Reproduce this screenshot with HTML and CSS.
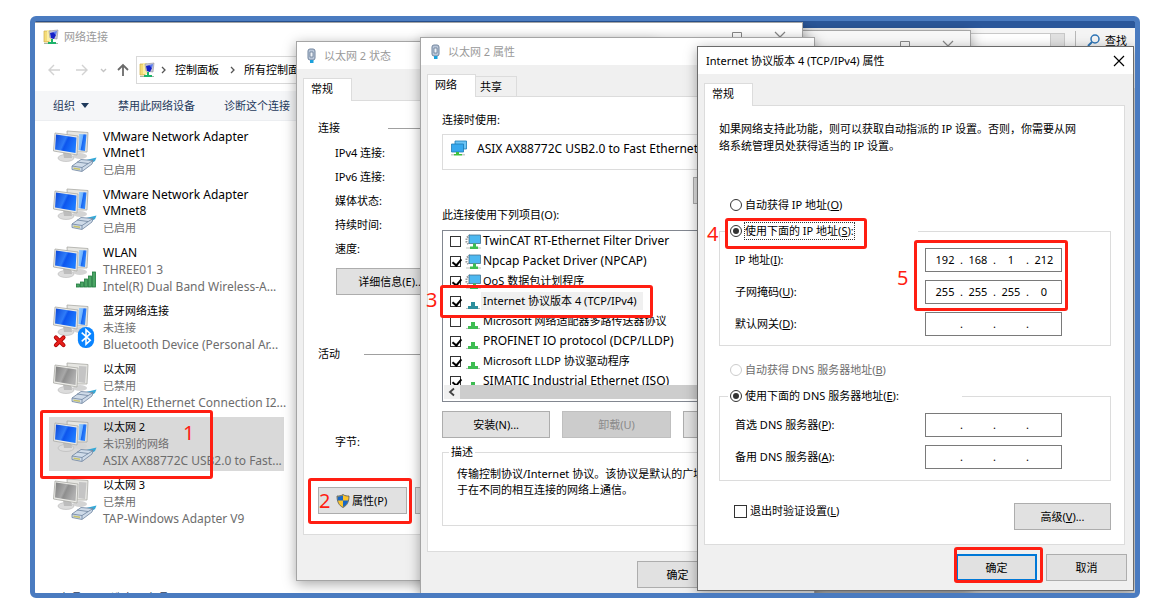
FILE: index.html
```html
<!DOCTYPE html>
<html lang="zh-CN">
<head>
    <meta charset="UTF-8">
    <title>网络连接</title>
    <link rel="stylesheet" href="styles.css">
</head>
<body>
    <!-- Icons -->
    <svg class="sprite" aria-hidden="true">
        <defs>
            <linearGradient id="blue" x1="0" y1="0" x2="1" y2="0.400">
                <stop offset="0" stop-color="#0a45d8"/>
                <stop offset="0.5" stop-color="#2f7cf8"/>
                <stop offset="0.6" stop-color="#0d55ee"/>
                <stop offset="1" stop-color="#1b78ff"/>
            </linearGradient>
            <linearGradient id="blue-back" x1="0" y1="0" x2="1" y2="0.400">
                <stop offset="0" stop-color="#9cd0ff"/>
                <stop offset="0.5" stop-color="#6fb4ff"/>
                <stop offset="0.6" stop-color="#1a66f0"/>
                <stop offset="1" stop-color="#2f8aff"/>
            </linearGradient>
            <linearGradient id="gray" x1="0" y1="0" x2="1" y2="0.400">
                <stop offset="0" stop-color="#7d7d7d"/>
                <stop offset="0.5" stop-color="#a8a8a8"/>
                <stop offset="0.6" stop-color="#8e8e8e"/>
                <stop offset="1" stop-color="#b0b0b0"/>
            </linearGradient>
        </defs>
        <symbol id="case" viewBox="0 0 44 44">
            <ellipse cx="27" cy="26" rx="7" ry="3" fill="#d4d4d4"/>
            <path d="M14 1 L35 2.500 L34 22 L15 22Z" fill="#e6e6e2" stroke="#a9a9a5" stroke-width="0.8"/>
            <ellipse cx="13" cy="28" rx="8" ry="3.5" fill="#dcdcdc" stroke="#b5b5b5" stroke-width="0.6"/>
            <path d="M10 22h8l1 6h-8z" fill="#bdbdbd"/>
            <path d="M2 3 L25 6 L24 25 L0.500 21Z" fill="#ecece8" stroke="#a9a9a5" stroke-width="0.8"/>
        </symbol>
        <symbol id="pc" viewBox="0 0 44 44">
            <use href="#case"/>
            <path d="M26 4 L33.500 4.500 L32 21 L25.500 20Z" fill="url(#blue-back)"/>
            <path d="M3 4.500 L23.500 7.500 L22.500 23 L2 19.500Z" fill="url(#blue)"/>
        </symbol>
        <symbol id="pc-off" viewBox="0 0 44 44">
            <use href="#case"/>
            <path d="M26 4 L33.500 4.500 L32 21 L25.500 20Z" fill="#c4c4c4"/>
            <path d="M3 4.500 L23.500 7.500 L22.500 23 L2 19.500Z" fill="url(#gray)"/>
        </symbol>
        <symbol id="plug" viewBox="0 0 44 44">
            <path d="M33 30 L43.500 27.500 L42 31 L37 34Z" fill="#35a9d8"/>
            <path d="M19 36 L28 29.500 L40 30.500 L39 34 L29 41.500 L19 39.500Z" fill="#cfdbe9" stroke="#6d839e" stroke-width="0.8"/>
            <path d="M19 36 L29 37.500 L40 30.500 M29 37.500 L29 41 M24 32 L35 33.500" fill="none" stroke="#6d839e" stroke-width="0.8"/>
            <path d="M20.500 37.500 L27 38.500 L27 40 L20.500 39Z" fill="#c9c46a"/>
        </symbol>
        <symbol id="bars" viewBox="0 0 44 44">
            <g fill="#4aa564" stroke="#1e7a3c" stroke-width="0.8">
                <rect x="23.500" y="38" width="3" height="3"/>
                <rect x="27.500" y="36" width="3" height="5"/>
                <rect x="31.500" y="33" width="3" height="8"/>
                <rect x="35.500" y="30" width="3" height="11"/>
                <rect x="39.500" y="26" width="3" height="15"/>
            </g>
        </symbol>
        <symbol id="bluetooth" viewBox="0 0 44 46">
            <rect x="25" y="24" width="17" height="22" rx="8" fill="#0a84ff"/>
            <path d="M29 30 L38 38 L33.500 42 L33.500 27 L38 31 L29 39" fill="none" stroke="#fff" stroke-width="1.6"/>
            <path d="M2 35 L10 43 M10 35 L2 43" stroke="#a80000" stroke-width="4.200" stroke-linecap="round"/>
            <path d="M2 35 L10 43 M10 35 L2 43" stroke="#e8201c" stroke-width="2.600" stroke-linecap="round"/>
        </symbol>
        <symbol id="folder-net" viewBox="0 0 16 16">
            <path d="M1 2h5v11H1z" fill="#f5dc78" stroke="#cfae45" stroke-width="0.7"/>
            <path d="M4 1h4v11H4z" fill="#fbeea5"/>
            <path d="M6 2 L15 1 L14 10 L7 9Z" fill="#c9c9d6" stroke="#8e8ea0" stroke-width="0.6"/>
            <path d="M7 4 L11 3 L13 6 L11 10 L8 9Z" fill="#1420c8"/>
            <path d="M10 3 L14 2 L13 6Z" fill="#5b7cf0"/>
            <path d="M8 10h2v3H8z M5 13h8v2H5z" fill="#1db36a"/>
            <path d="M1 14h4v1H1z M13 14h2v1h-2z" fill="#a5b5a5"/>
        </symbol>
        <symbol id="cable" viewBox="0 0 12 16">
            <rect x="2" y="1" width="7" height="11" rx="2" fill="#b9c6d8" stroke="#73869f"/>
            <path d="M4 4h3v5H4z" fill="#eef3f8" stroke="#5a6e8a" stroke-width="0.7"/>
            <path d="M4 12h3.500v3H4z" fill="#1ba1dc"/>
        </symbol>
        <symbol id="screens" viewBox="0 0 18 18">
            <path d="M5 1h11.500v8H5z" fill="#6cc4f5" stroke="#1d7bb4" stroke-width="0.8"/>
            <path d="M1.500 4h12v8h-12z" fill="#36a8ee" stroke="#1d7bb4" stroke-width="0.8"/>
            <path d="M6 12h3v2H6z M4 14h8v1.500H4z" fill="#3fbf3f"/>
            <path d="M1 14h3v1.500H1z M12 14h3v1.500h-3z" fill="#cdcdcd"/>
        </symbol>
        <symbol id="service" viewBox="0 0 16 16">
            <path d="M5 1 L1.500 4 L1.500 8 L4 11" fill="none" stroke="#9b9b9b" stroke-width="2" stroke-dasharray="1.500 1"/>
            <path d="M4 1h11.500v8.500H4z" fill="#4db8f0" stroke="#40718f" stroke-width="0.8"/>
            <path d="M8 9.500h3v3H8z M5 12.500h8v2.500H5z" fill="#3ebd52"/>
            <path d="M1 13h4v2H1z M13 13h3v2h-3z" fill="#dde2dd"/>
        </symbol>
        <symbol id="protocol" viewBox="0 0 16 16">
            <path d="M6 8h4v4H6z M3 12h10v3H3z" fill="currentColor"/>
            <path d="M1 14h2v1H1z M13 14h2v1h-2z" fill="#bbb"/>
        </symbol>
        <symbol id="shield" viewBox="0 0 14 14">
            <path d="M7 0.500 C5 2 3 2 1 2 C1 8 3 11.500 7 13.500 C11 11.500 13 8 13 2 C11 2 9 2 7 0.500Z" fill="#fcc52c" stroke="#555" stroke-width="0.8"/>
            <path d="M7 1.200 C5 2.400 3 2.500 1.500 2.500 L1.600 6.500 H7Z M7 6.500h5.300C11.600 9.500 10 11.500 7 13Z" fill="#1a67c6"/>
        </symbol>
        <symbol id="min" viewBox="0 0 12 12"><path d="M1 6.500h10" stroke="currentColor"/></symbol>
        <symbol id="max" viewBox="0 0 12 12"><path d="M1.500 1.500h9v9h-9z" fill="none" stroke="currentColor"/></symbol>
        <symbol id="close" viewBox="0 0 12 12"><path d="M1 1l10 10M11 1L1 11" stroke="currentColor" stroke-width="1.200"/></symbol>
    </svg>

    <main class="desktop">
        <!-- Document editor in the background -->
        <div class="editor">
            <div class="editor-title"></div>
            <div class="editor-ribbon">
                <div class="style-list"><span class="style-scroll"></span></div>
                <button class="find">
                    <svg viewBox="0 0 13 13"><circle cx="8" cy="5" r="4" fill="none" stroke="#2e75b6" stroke-width="1.500"/><path d="M5 8L1 12" stroke="#2e75b6" stroke-width="2"/></svg>
                    查找
                </button>
            </div>
        </div>

        <section class="window back-window">
            <div class="caption">
                <button aria-label="最大化"><svg><use href="#max"/></svg></button>
                <button aria-label="关闭"><svg><use href="#close"/></svg></button>
            </div>
        </section>

        <!-- Network connections -->
        <section class="window explorer">
            <header class="explorer-title">
                <svg class="icon16"><use href="#folder-net"/></svg>
                <span>网络连接</span>
                <div class="caption">
                    <button aria-label="最小化"><svg><use href="#min"/></svg></button>
                    <button aria-label="最大化"><svg><use href="#max"/></svg></button>
                    <button aria-label="关闭"><svg><use href="#close"/></svg></button>
                </div>
            </header>
            <nav class="nav-row">
                <svg class="nav-arrows" viewBox="0 0 84 16" fill="none">
                    <path d="M12 8H1M6 3L1 8l5 5" stroke="#d2d2d2" stroke-width="1.400"/>
                    <path d="M28 8h11M34 3l5 5-5 5" stroke="#d2d2d2" stroke-width="1.400"/>
                    <path d="M53 7l2.500 2.500L58 7" stroke="#c4c4c4" stroke-width="1.400"/>
                    <path d="M75 14V3M70 8l5-5 5 5" stroke="#6a6a6a" stroke-width="1.800"/>
                </svg>
                <div class="address">
                    <svg class="icon16"><use href="#folder-net"/></svg>
                    <svg class="crumb" viewBox="0 0 6 8"><path d="M1 1l3 3-3 3" fill="none" stroke="#555" stroke-width="1.300"/></svg>
                    <a href="#">控制面板</a>
                    <svg class="crumb" viewBox="0 0 6 8"><path d="M1 1l3 3-3 3" fill="none" stroke="#555" stroke-width="1.300"/></svg>
                    <a href="#">所有控制面板项</a>
                </div>
            </nav>
            <div class="commands">
                <button>组织 <span class="arrow"></span></button>
                <button>禁用此网络设备</button>
                <button>诊断这个连接</button>
            </div>
            <ul class="adapters">
                <li>
                    <svg><use href="#pc"/><use href="#plug"/></svg>
                    <div><b class="latin">VMware Network Adapter VMnet1</b><span>已启用</span></div>
                </li>
                <li>
                    <svg><use href="#pc"/><use href="#plug"/></svg>
                    <div><b class="latin">VMware Network Adapter VMnet8</b><span>已启用</span></div>
                </li>
                <li>
                    <svg><use href="#pc"/><use href="#bars"/></svg>
                    <div><b class="latin">WLAN</b><span class="latin">THREE01 3</span><span class="latin">Intel(R) Dual Band Wireless-A...</span></div>
                </li>
                <li>
                    <svg><use href="#pc"/><use href="#bluetooth"/></svg>
                    <div><b>蓝牙网络连接</b><span>未连接</span><span class="latin">Bluetooth Device (Personal Ar...</span></div>
                </li>
                <li>
                    <svg><use href="#pc-off"/><use href="#plug"/></svg>
                    <div><b>以太网</b><span>已禁用</span><span class="latin">Intel(R) Ethernet Connection I2...</span></div>
                </li>
                <li class="selected">
                    <svg><use href="#pc"/><use href="#plug"/></svg>
                    <div><b>以太网 2</b><span>未识别的网络</span><span class="latin">ASIX AX88772C USB2.0 to Fast...</span></div>
                </li>
                <li>
                    <svg><use href="#pc-off"/><use href="#plug"/></svg>
                    <div><b>以太网 3</b><span>已禁用</span><span class="latin">TAP-Windows Adapter V9</span></div>
                </li>
            </ul>
            <footer class="explorer-status"><span>7 个项目</span><span>选中 1 个项目</span></footer>
        </section>

        <!-- Ethernet 2 status -->
        <section class="window dialog status">
            <header class="title"><svg class="icon-cable"><use href="#cable"/></svg>以太网 2 状态</header>
            <div class="tabs"><button class="tab active">常规</button></div>
            <div class="panel">
                <h2>连接</h2>
                <ul class="facts">
                    <li>IPv4 连接:</li>
                    <li>IPv6 连接:</li>
                    <li>媒体状态:</li>
                    <li>持续时间:</li>
                    <li>速度:</li>
                </ul>
                <button class="btn details">详细信息(E)...</button>
                <h2 class="activity">活动</h2>
                <p class="bytes">字节:</p>
                <div class="btn-row">
                    <button class="btn"><svg class="icon-shield"><use href="#shield"/></svg>属性(P)</button>
                    <button class="btn" aria-label="禁用"></button>
                </div>
            </div>
        </section>

        <!-- Ethernet 2 properties -->
        <section class="window dialog properties">
            <header class="title"><svg class="icon-cable"><use href="#cable"/></svg>以太网 2 属性</header>
            <div class="tabs"><button class="tab active">网络</button><button class="tab">共享</button></div>
            <div class="panel">
                <p>连接时使用:</p>
                <div class="device latin"><svg><use href="#screens"/></svg>ASIX AX88772C USB2.0 to Fast Ethernet</div>
                <button class="btn configure" aria-label="配置"></button>
                <p>此连接使用下列项目(O):</p>
                <div class="items">
                    <div class="item-list">
                        <label><input type="checkbox"><svg><use href="#service"/></svg><span class="latin">TwinCAT RT-Ethernet Filter Driver</span></label>
                        <label><input type="checkbox" checked><svg><use href="#service"/></svg><span class="latin">Npcap Packet Driver (NPCAP)</span></label>
                        <label><input type="checkbox" checked><svg><use href="#service"/></svg><span>QoS 数据包计划程序</span></label>
                        <label class="current"><input type="checkbox" checked><svg><use href="#protocol"/></svg><span>Internet 协议版本 4 (TCP/IPv4)</span></label>
                        <label><input type="checkbox"><svg><use href="#protocol"/></svg><span>Microsoft 网络适配器多路传送器协议</span></label>
                        <label><input type="checkbox" checked><svg><use href="#protocol"/></svg><span class="latin">PROFINET IO protocol (DCP/LLDP)</span></label>
                        <label><input type="checkbox" checked><svg><use href="#protocol"/></svg><span>Microsoft LLDP 协议驱动程序</span></label>
                        <label><input type="checkbox" checked><svg><use href="#protocol"/></svg><span class="latin">SIMATIC Industrial Ethernet (ISO)</span></label>
                    </div>
                    <div class="scrollbar">
                        <svg viewBox="0 0 16 14"><path d="M10 3.500L6 7l4 3.500" fill="none" stroke="#444" stroke-width="1.800"/></svg>
                        <span></span>
                    </div>
                </div>
                <div class="btn-row">
                    <button class="btn">安装(N)...</button>
                    <button class="btn" disabled>卸载(U)</button>
                    <button class="btn" aria-label="属性"></button>
                </div>
                <fieldset>
                    <legend>描述</legend>
                    <p>传输控制协议/Internet 协议。该协议是默认的广域网络协议，用于在不同的相互连接的网络上通信。</p>
                </fieldset>
            </div>
            <footer class="dialog-buttons">
                <button class="btn">确定</button>
                <button class="btn" aria-label="取消"></button>
            </footer>
        </section>

        <!-- IPv4 properties -->
        <section class="window dialog ipv4">
            <header class="title">Internet 协议版本 4 (TCP/IPv4) 属性
                <button class="title-close" aria-label="关闭"><svg><use href="#close"/></svg></button>
            </header>
            <div class="tabs"><button class="tab active">常规</button></div>
            <form class="panel" onsubmit="return false">
                <p class="intro">如果网络支持此功能，则可以获取自动指派的 IP 设置。否则，你需要从网络系统管理员处获得适当的 IP 设置。</p>
                <label class="choice"><input type="radio" name="ip"><span>自动获得 IP 地址(<u>O</u>)</span></label>
                <fieldset>
                    <legend><label class="choice focused"><input type="radio" name="ip" checked><span>使用下面的 IP 地址(<u>S</u>):</span></label></legend>
                    <div class="field">
                        <label for="ip1">IP 地址(<u>I</u>):</label>
                        <div class="ip-box"><input id="ip1" value="192">.<input value="168" aria-label="IP 2">.<input value="1" aria-label="IP 3">.<input value="212" aria-label="IP 4"></div>
                    </div>
                    <div class="field">
                        <label for="mask1">子网掩码(<u>U</u>):</label>
                        <div class="ip-box"><input id="mask1" value="255">.<input value="255" aria-label="掩码 2">.<input value="255" aria-label="掩码 3">.<input value="0" aria-label="掩码 4"></div>
                    </div>
                    <div class="field">
                        <label for="gate1">默认网关(<u>D</u>):</label>
                        <div class="ip-box"><input id="gate1">.<input aria-label="网关 2">.<input aria-label="网关 3">.<input aria-label="网关 4"></div>
                    </div>
                </fieldset>
                <label class="choice dns-auto"><input type="radio" name="dns" disabled><span>自动获得 DNS 服务器地址(<u>B</u>)</span></label>
                <fieldset class="dns">
                    <legend><label class="choice"><input type="radio" name="dns" checked><span>使用下面的 DNS 服务器地址(<u>E</u>):</span></label></legend>
                    <div class="field">
                        <label for="dns1">首选 DNS 服务器(<u>P</u>):</label>
                        <div class="ip-box"><input id="dns1">.<input aria-label="首选 2">.<input aria-label="首选 3">.<input aria-label="首选 4"></div>
                    </div>
                    <div class="field">
                        <label for="alt1">备用 DNS 服务器(<u>A</u>):</label>
                        <div class="ip-box"><input id="alt1">.<input aria-label="备用 2">.<input aria-label="备用 3">.<input aria-label="备用 4"></div>
                    </div>
                </fieldset>
                <div class="last-row">
                    <label><input type="checkbox">退出时验证设置(<u>L</u>)</label>
                    <button class="btn">高级(<u>V</u>)...</button>
                </div>
            </form>
            <footer class="dialog-buttons">
                <button class="btn default">确定</button>
                <button class="btn">取消</button>
            </footer>
        </section>

        <!-- Step marks -->
        <div class="mark mark-1"></div><span class="step step-1">1</span>
        <div class="mark mark-2"></div><span class="step step-2">2</span>
        <div class="mark mark-3"></div><span class="step step-3">3</span>
        <div class="mark mark-4"></div><span class="step step-4">4</span>
        <div class="mark mark-5"></div><span class="step step-5">5</span>
        <div class="mark mark-ok"></div>
    </main>
</body>
</html>
```

FILE: styles.css
```css
* {
    box-sizing: border-box;
}

body {
    margin: 0;
    padding: 16px 30px 10px;
    height: 100vh;
    background: #fff;
    color: #000;
    font-family: "Noto Sans", "Noto Sans CJK SC", sans-serif;
    font-size: 11px;
    line-height: 16px;
}

button, input {
    font: inherit;
    color: inherit;
}

p, h2, ul, fieldset {
    margin: 0;
    padding: 0;
}

ul {
    list-style: none;
}

svg {
    flex: none;
    display: block;
}

.latin {
    font-size: 12px;
}

.sprite {
    position: absolute;
    width: 0;
    height: 0;
}

.desktop {
    position: relative;
    height: 100%;
    min-height: 582px;
    overflow: hidden;
    border: 5px solid #4a7bc0;
    border-radius: 6px;
    background: #dcdcdc;
}

.window {
    position: absolute;
    background: #fff;
    border: 1px solid #a5a5a5;
    box-shadow: 0 3px 12px rgba(0, 0, 0, 0.35);
}

.icon16 {
    width: 16px;
    height: 16px;
}

/* Editor */
.editor-title {
    height: 7px;
    background: #2b579a;
}

.editor-ribbon {
    display: flex;
    justify-content: flex-end;
    height: 60px;
    padding: 3px 8px;
    background: #f4f4f4;
}

.style-list {
    width: 160px;
    margin: 2px 10px 0 0;
    border: 1px solid #c8c8c8;
    background: #fff;
}

.style-scroll {
    display: block;
    width: 14px;
    height: 100%;
    margin-left: auto;
    background: #e1e1e1;
    border-left: 1px solid #c8c8c8;
}

.find {
    display: flex;
    align-items: flex-start;
    gap: 5px;
    padding: 2px 0 0 11px;
    border: 0;
    border-left: 1px solid #b8b8b8;
    background: none;
}

.find svg {
    width: 13px;
    height: 13px;
    margin-top: 1px;
}

.caption {
    display: flex;
    gap: 31px;
    margin-left: auto;
    color: #888;
}

.caption button {
    padding: 0;
    border: 0;
    background: none;
}

.caption svg {
    width: 12px;
    height: 12px;
}

.back-window {
    top: 9px;
    left: 400px;
    width: 536px;
    height: 560px;
    padding: 9px 16px;
    background: #f7f7f7;
}

.back-window .caption {
    justify-content: flex-end;
}

/* Explorer */
.explorer {
    top: 1px;
    left: 0;
    width: 768px;
    height: calc(100% + 13px);
    border-left: 0;
    display: flex;
    flex-direction: column;
}

.explorer-title {
    display: flex;
    align-items: center;
    gap: 5px;
    height: 28px;
    padding: 0 16px 0 8px;
    color: #999;
}

.nav-row {
    display: flex;
    align-items: center;
    gap: 4px;
    padding: 5px 0 7px 13px;
}

.nav-arrows {
    width: 84px;
    height: 16px;
}

.address {
    display: flex;
    align-items: center;
    flex: 1;
    height: 28px;
    padding-left: 2px;
    border: 1px solid #d9d9d9;
}

.crumb {
    width: 6px;
    height: 8px;
    margin: 0 8px 0 6px;
}

.address a {
    color: #000;
    text-decoration: none;
}

.address a + .crumb {
    margin: 0 8px 0 11px;
}

.commands {
    display: flex;
    gap: 29px;
    height: 30px;
    padding-left: 18px;
    background: #f5f6f8;
    border-bottom: 1px solid #eceef1;
}

.commands button {
    display: flex;
    align-items: center;
    gap: 6px;
    padding: 0;
    border: 0;
    background: none;
    color: #1e395b;
}

.arrow {
    border: 4px solid transparent;
    border-top: 5px solid #1e395b;
    border-bottom: 0;
}

.adapters {
    display: flex;
    flex-direction: column;
    gap: 4px;
    width: 235px;
    margin: 6px 0 0 14px;
}

.adapters li {
    display: flex;
    gap: 6px;
    height: 54px;
    padding: 2px 0 0 4px;
    line-height: 17px;
    color: #6d6d6d;
    white-space: nowrap;
}

.adapters svg {
    width: 44px;
    height: 44px;
    margin-top: 1px;
    overflow: visible;
}

.adapters div {
    flex: 1;
}

.adapters b {
    display: block;
    font-weight: normal;
    line-height: 16px;
    color: #000;
    white-space: normal;
    padding-right: 20px;
}

.adapters span {
    display: block;
}

.adapters .selected {
    background: #d9d9d9;
}

.explorer-status {
    display: flex;
    gap: 20px;
    margin: auto 0 0 14px;
    color: #1e395b;
}

/* Dialogs */
.dialog {
    background: #f0f0f0;
}

.title {
    display: flex;
    align-items: center;
    gap: 6px;
    height: 27px;
    padding-left: 9px;
    background: #fff;
    color: #999;
}

.icon-cable {
    width: 12px;
    height: 16px;
}

.tabs {
    display: flex;
    align-items: flex-end;
    height: 31px;
    padding-left: 6px;
}

.tab {
    width: 41px;
    height: 20px;
    padding: 0 0 0 4px;
    border: 1px solid #dcdcdc;
    border-width: 1px 1px 0 0;
    background: #f0f0f0;
    text-align: left;
}

.tab.active {
    position: relative;
    width: 49px;
    height: 23px;
    margin-bottom: -1px;
    padding: 0 0 2px 7px;
    border-width: 1px 1px 0;
    background: #fff;
}

.panel {
    margin: 0 8px 0 6px;
    padding: 14px 13px 14px 14px;
    border: 1px solid #dcdcdc;
    background: #fff;
}

.btn {
    height: 27px;
    padding: 0;
    border: 1px solid #adadad;
    background: #e1e1e1;
}

.btn:disabled {
    border-color: #bfbfbf;
    background: #ccc;
    color: #8a8a8a;
}

.btn-row {
    display: flex;
}

fieldset {
    min-width: 0;
    border: 1px solid #dcdcdc;
}

legend {
    padding: 0;
}

input[type="checkbox"], input[type="radio"] {
    appearance: none;
    flex: none;
    margin: 0;
    border: 1px solid #333;
    background: #fff;
}

input[type="checkbox"] {
    width: 11px;
    height: 11px;
}

input[type="checkbox"]:checked::before {
    content: "";
    display: block;
    width: 4px;
    height: 7px;
    margin: 0 0 0 3px;
    border: solid #000;
    border-width: 0 2px 2px 0;
    transform: rotate(40deg);
}

input[type="radio"] {
    width: 12px;
    height: 12px;
    padding: 2px;
    border-radius: 50%;
}

input[type="radio"]:checked {
    background: #333 content-box;
}

input:disabled {
    border-color: #ccc;
}

.dialog-buttons {
    display: flex;
    justify-content: flex-end;
    gap: 9px;
    padding: 9px 6px;
}

.dialog-buttons .btn {
    width: 81px;
}

/* Status */
.status {
    top: 20px;
    left: 261px;
    width: 360px;
    padding-bottom: 45px;
}

.status .panel {
    padding: 19px 14px 20px;
}

.status h2 {
    display: flex;
    align-items: center;
    gap: 48px;
    font-size: 11px;
    font-weight: normal;
}

.status h2::after {
    content: "";
    flex: 1;
    height: 1px;
    background: #a0a0a0;
}

.status .activity {
    gap: 24px;
    margin-top: 51px;
}

.facts {
    padding: 5px 0 7px 17px;
    line-height: 24px;
}

.details {
    display: block;
    width: 110px;
    margin-left: 18px;
}

.bytes {
    margin: 72px 0 37px;
    padding-left: 17px;
}

.status .btn-row {
    gap: 8px;
}

.status .btn-row .btn {
    display: flex;
    align-items: center;
    justify-content: flex-start;
    gap: 2px;
    width: 89px;
    padding-left: 17px;
}

.icon-shield {
    width: 14px;
    height: 14px;
}

/* Properties */
.properties {
    top: 16px;
    left: 385px;
    width: 395px;
}

.properties .panel {
    padding: 15px 14px 25px;
}

.device {
    display: flex;
    align-items: center;
    gap: 9px;
    height: 36px;
    margin-top: 6px;
    padding: 0 0 6px 7px;
    border: 1px solid #dcdcdc;
    white-space: nowrap;
}

.device svg {
    width: 18px;
    height: 18px;
}

.configure {
    display: block;
    width: 98px;
    margin: 7px 0 3px auto;
}

.items {
    margin: 7px 0 9px;
    padding: 0 1px 2px;
    border: 1px solid #828790;
}

.item-list {
    height: 154px;
    overflow: hidden;
}

.items label {
    display: flex;
    align-items: center;
    height: 20px;
    padding-left: 6px;
}

.item-list svg {
    width: 16px;
    height: 16px;
    margin: 2px 0 0 4px;
    color: #3ebd52;
}

.items .current svg {
    color: #2c8f9c;
}

.items label span {
    padding: 0 6px 0 2px;
    line-height: 18px;
}

.items .current span {
    background: #f0f0f0;
}

.scrollbar {
    display: flex;
    height: 14px;
    background: #f0f0f0;
}

.scrollbar svg {
    width: 16px;
    height: 14px;
}

.scrollbar span {
    width: 300px;
    background: #cdcdcd;
}

.properties .btn-row {
    gap: 12px;
}

.properties .btn-row .btn {
    width: 109px;
}

.properties fieldset {
    height: 82px;
    margin-top: 6px;
    padding: 6px 14px;
}

.properties legend {
    margin-left: -8px;
    padding: 0 2px;
}

/* IPv4 */
.ipv4 {
    top: 25px;
    left: 662px;
    width: 437px;
    border-color: #6b6b6b;
}

.ipv4 .title {
    padding: 0 8px 0 8px;
    color: #000;
}

.title-close {
    margin-left: auto;
    padding: 0;
    border: 0;
    background: none;
}

.title-close svg {
    width: 12px;
    height: 12px;
}

.intro {
    margin-bottom: 43px;
    padding-right: 30px;
    line-height: 17px;
}

.choice {
    display: flex;
    align-items: center;
    gap: 3px;
    margin-left: 11px;
}

legend .choice {
    margin: 0;
}

.focused span {
    outline: 1px dotted #333;
}

.ipv4 fieldset {
    margin-top: 10px;
    padding: 1px 0 9px 15px;
}

.ipv4 legend {
    width: 190px;
    margin-left: -7px;
    padding-left: 2px;
}

.ipv4 .dns {
    padding-bottom: 11px;
}

.ipv4 .dns legend {
    width: 234px;
}

.field {
    display: grid;
    grid-template-columns: 190px 137px;
    align-items: center;
    margin-top: 8px;
}

.ip-box {
    display: flex;
    align-items: center;
    height: 24px;
    padding-left: 4px;
    border: 1px solid #7a7a7a;
    background: #fff;
}

.ip-box input {
    width: 30px;
    padding: 0;
    border: 0;
    outline: 0;
    background: none;
    text-align: center;
}

.dns-auto {
    margin-top: 16px;
    color: #6d6d6d;
}

.last-row {
    display: flex;
    justify-content: space-between;
    align-items: flex-start;
    margin: 22px 0 0 15px;
}

.last-row label {
    display: flex;
    align-items: center;
}

.last-row input {
    margin-right: 3px;
    width: 13px;
    height: 13px;
}

.last-row .btn {
    width: 97px;
}

.btn.default {
    border: 2px solid #0078d7;
}

/* Step marks */
.mark {
    position: absolute;
    border: 3px solid #ff1e12;
    border-radius: 3px;
}

.mark-1 { left: 5px; top: 389px; width: 173px; height: 69px; }
.mark-2 { left: 273px; top: 457px; width: 104px; height: 46px; }
.mark-3 { left: 405px; top: 264px; width: 213px; height: 33px; }
.mark-4 { left: 690px; top: 197px; width: 142px; height: 31px; }
.mark-5 { left: 879px; top: 219px; width: 154px; height: 71px; }
.mark-ok { left: 919px; top: 526px; width: 89px; height: 36px; }

.step {
    position: absolute;
    color: #ff1e12;
    font-size: 20px;
    line-height: 24px;
}

.step-1 { left: 148px; top: 400px; }
.step-2 { left: 284px; top: 468px; }
.step-3 { left: 391px; top: 267px; }
.step-4 { left: 672px; top: 201px; }
.step-5 { left: 862px; top: 245px; }
```
